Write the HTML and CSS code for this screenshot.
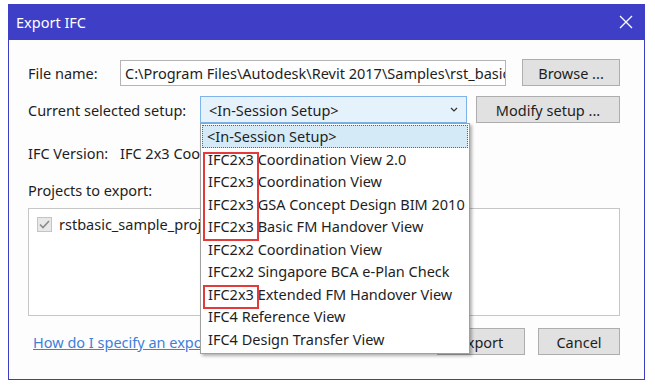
FILE: index.html
```html
<!DOCTYPE html>
<html lang="en">
<head>
    <meta charset="UTF-8">
    <title>Export IFC</title>
    <link rel="stylesheet" href="styles.css">
</head>
<body>
    <div class="window">
        <div class="titlebar">
            <span class="title">Export IFC</span>
            <svg class="close" width="14" height="14" viewBox="0 0 14 14">
                <path d="M1 1 L13 13 M13 1 L1 13" stroke="#fff" stroke-width="1.3" fill="none"/>
            </svg>
        </div>
        <div class="content">
            <div class="row row-file">
                <label class="label label-file">File name:</label>
                <div class="input">C:\Program Files\Autodesk\Revit 2017\Samples\rst_basic_sample_project.rvt</div>
                <button class="btn btn-browse">Browse ...</button>
            </div>
            <div class="row row-setup">
                <label class="label label-setup">Current selected setup:</label>
                <div class="combo">
                    <span>&lt;In-Session Setup&gt;</span>
                    <svg class="chevron" width="8" height="5" viewBox="0 0 8 5">
                        <path d="M1 1 L4 4 L7 1" stroke="#333" stroke-width="1.2" fill="none"/>
                    </svg>
                </div>
                <button class="btn btn-modify">Modify setup ...</button>
            </div>
            <div class="row row-version">
                <span class="label label-file">IFC Version:</span>
                <span>IFC 2x3 Coordination View 2.0</span>
            </div>
            <div class="row row-projects">
                <span class="label">Projects to export:</span>
            </div>
            <div class="projects">
                <div class="project">
                    <span class="checkbox">
                        <svg width="11" height="9" viewBox="0 0 11 9">
                            <path d="M1 4.5 L4 7.5 L10 1" stroke="#8a8a8a" stroke-width="1.6" fill="none"/>
                        </svg>
                    </span>
                    <span>rstbasic_sample_project</span>
                </div>
            </div>
            <div class="row row-bottom">
                <a class="link" href="#">How do I specify an export setup?</a>
                <div class="actions">
                    <button class="btn btn-export">Export</button>
                    <button class="btn btn-cancel">Cancel</button>
                </div>
            </div>
        </div>

        <ul class="dropdown">
            <li class="selected">&lt;In-Session Setup&gt;</li>
            <li>IFC2x3 Coordination View 2.0</li>
            <li>IFC2x3 Coordination View</li>
            <li>IFC2x3 GSA Concept Design BIM 2010</li>
            <li>IFC2x3 Basic FM Handover View</li>
            <li>IFC2x2 Coordination View</li>
            <li>IFC2x2 Singapore BCA e-Plan Check</li>
            <li>IFC2x3 Extended FM Handover View</li>
            <li>IFC4 Reference View</li>
            <li>IFC4 Design Transfer View</li>
            <div class="mark mark-a"></div>
            <div class="mark mark-b"></div>
        </ul>
    </div>
</body>
</html>
```

FILE: styles.css
```css
body {
    margin: 0;
    background: #ffffff;
    font-family: "Noto Sans", "Liberation Sans", sans-serif;
    font-size: 14.5px;
    color: #1e1e1e;
}
.window {
    position: relative;
    box-sizing: border-box;
    margin: 4px 0 0 8px;
    width: 637px;
    height: 376px;
    border: 1px solid #3d3dc4;
    background: #fdfdfd;
}
.titlebar {
    height: 36px;
    margin: -1px -1px 0 -1px;
    background: #3e3ec7;
    color: #ffffff;
    display: flex;
    align-items: center;
    justify-content: space-between;
    padding: 0 12px 0 8px;
}
.title {
    font-size: 14.5px;
}
.content {
    padding: 19px 24px 0 19px;
}
.row {
    display: flex;
    align-items: center;
}
.label-file {
    width: 92px;
}
.label-setup {
    width: 172px;
}
.input {
    box-sizing: border-box;
    width: 386px;
    height: 26px;
    line-height: 24px;
    padding: 0 4px;
    border: 1px solid #b4b4b4;
    background: #fff;
    white-space: nowrap;
    overflow: hidden;
}
.btn {
    box-sizing: border-box;
    height: 27px;
    font-family: inherit;
    font-size: 14.5px;
    color: #1e1e1e;
    background: #e1e1e1;
    border: 1px solid #adadad;
    padding: 0;
}
.btn-browse {
    width: 98px;
    margin-left: 16px;
}
.row-setup {
    margin-top: 10px;
}
.combo {
    box-sizing: border-box;
    width: 267px;
    height: 27px;
    border: 1px solid #7eb4ea;
    background: #e5f1fb;
    display: flex;
    align-items: center;
    justify-content: space-between;
    padding: 0 8px 0 8px;
}
.btn-modify {
    width: 144px;
    margin-left: 9px;
}
.row-version {
    margin-top: 20px;
    height: 20px;
}
.row-projects {
    margin-top: 17px;
    height: 20px;
}
.projects {
    box-sizing: border-box;
    margin-top: 8px;
    width: 592px;
    height: 108px;
    border: 1px solid #c6c6c6;
    background: #fff;
    padding: 5px 8px;
}
.project {
    display: flex;
    align-items: center;
    gap: 7px;
}
.checkbox {
    box-sizing: border-box;
    width: 15px;
    height: 15px;
    border: 1px solid #c4c4c4;
    background: #e8e8e8;
    display: flex;
    align-items: center;
    justify-content: center;
}
.row-bottom {
    margin-top: 12px;
    justify-content: space-between;
}
.link {
    margin-left: 5px;
    color: #3f7fd9;
    text-decoration: underline;
}
.actions {
    display: flex;
    gap: 13px;
}
.btn-export {
    width: 88px;
}
.btn-cancel {
    width: 82px;
}
.dropdown {
    position: absolute;
    left: 191px;
    top: 118px;
    width: 270px;
    margin: 0;
    padding: 1px 0 3px 0;
    list-style: none;
    box-sizing: border-box;
    background: #ffffff;
    border: 1px solid #a0a0a0;
    box-shadow: 2px 2px 3px rgba(0, 0, 0, 0.3);
}
.dropdown li {
    height: 22.5px;
    line-height: 22.5px;
    padding-left: 7px;
    white-space: nowrap;
}
.dropdown li.selected {
    margin: 0 1px;
    padding-left: 5px;
    background: #d4eaf7;
    outline: 1px dotted #4a6a80;
    outline-offset: -1px;
}
.mark {
    position: absolute;
    left: 2px;
    width: 52px;
    border: 2px solid #e23b3b;
}
.mark-a {
    top: 28px;
    height: 85px;
}
.mark-b {
    top: 161px;
    height: 20px;
}
```
